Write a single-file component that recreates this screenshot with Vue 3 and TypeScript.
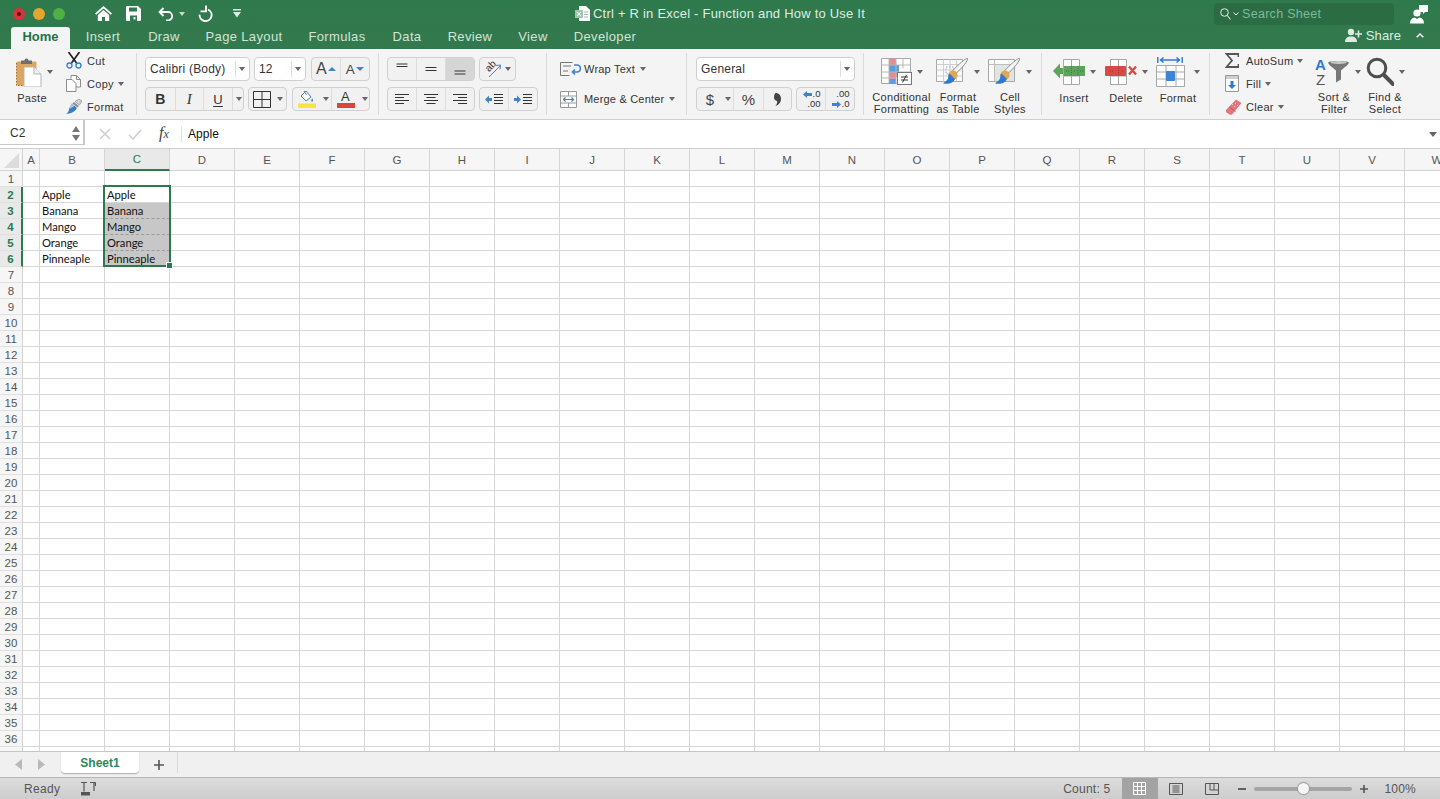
<script setup lang="ts">
const tabs: { label: string; width: number }[] = [
  { label: 'Insert', width: 66 },
  { label: 'Draw', width: 56 },
  { label: 'Page Layout', width: 104 },
  { label: 'Formulas', width: 82 },
  { label: 'Data', width: 58 },
  { label: 'Review', width: 68 },
  { label: 'View', width: 58 },
  { label: 'Developer', width: 86 },
]
const cols: string[] = 'ABCDEFGHIJKLMNOPQRSTUVW'.split('')
const rows: number[] = Array.from({ length: 37 }, (_, i) => i + 1)
const fruit: Record<number, string> = { 2: 'Apple', 3: 'Banana', 4: 'Mango', 5: 'Orange', 6: 'Pinneaple' }
function cellText(col: string, row: number): string {
  return col === 'B' || col === 'C' ? fruit[row] ?? '' : ''
}
function isSelRow(row: number): boolean {
  return row >= 2 && row <= 6
}
</script>

<template>
  <div class="app">
    <header class="head">
      <div class="titlebar">
        <div class="lights">
          <span class="light red"></span><span class="light yellow"></span><span class="light green"></span>
        </div>
        <svg class="q-home" width="17" height="15" viewBox="0 0 17 15"><path d="M8.5 0 0 7.5l1.2 1.3L8.5 2.4l7.3 6.4L17 7.500Z M2.800 9v6h4.200v-4h3v4h4.200V9L8.500 4Z" fill="#fff"/></svg>
        <svg class="q-save" width="15" height="15" viewBox="0 0 15 15"><path fill="#fff" fill-rule="evenodd" d="M1 0h11l3 3v11a1 1 0 0 1-1 1H1a1 1 0 0 1-1-1V1a1 1 0 0 1 1-1Zm2 1.500v4h8v-4Zm1 8V15h7V9.500Zm3.500 1.500h2v2.500h-2Z"/></svg>
        <svg class="q-undo" width="16" height="14" viewBox="0 0 16 14"><path d="M5.500 1 1.500 5l4 4M2 5h8a4.200 4.200 0 0 1 0 8.400H8" fill="none" stroke="#fff" stroke-width="1.800"/></svg>
        <span class="caret light-caret q-undo-c"></span>
        <svg class="q-redo" width="15" height="17" viewBox="0 0 15 17"><path d="M10 4.600a6 6 0 1 1-8.400 5M8 .5V6.400H2.500" fill="none" stroke="#fff" stroke-width="1.900"/></svg>
        <svg class="q-more" width="8" height="9" viewBox="0 0 8 9"><path d="M0 0h8v1.500H0Z M0 3h8L4 8.500Z" fill="#dfece4"/></svg>
        <div class="title">
          <svg width="15" height="15" viewBox="0 0 15 15"><path d="M4 0h7l4 4v11H4Z" fill="#fff"/><path d="M0 4h8v8H0Z" fill="#9fc7ae"/><path d="M9 6h4M9 8.500h4M9 11h4" stroke="#a9b8ae"/><path d="m2 6 4 4M6 6l-4 4" stroke="#fff"/></svg>
          <span>Ctrl + R in Excel - Function and How to Use It</span>
        </div>
        <div class="search">
          <svg width="11" height="12" viewBox="0 0 11 12"><circle cx="4.500" cy="4.500" r="3.800" fill="none" stroke="#e3efe8" stroke-width="1"/><path d="m7.300 7.500 3.200 4" stroke="#e3efe8" stroke-width="1.100"/></svg>
          <svg class="search-chev" width="6" height="4" viewBox="0 0 6 4"><path d="m.5.500 2.500 2.500L5.500.5" fill="none" stroke="#e3efe8"/></svg>
          <span>Search Sheet</span>
        </div>
        <svg class="person" width="18" height="20" viewBox="0 0 18 20"><path d="M9 1h9v7h-3l-2 2V8H9Z" fill="#fff"/><circle cx="7" cy="9" r="3.600" fill="#fff"/><path d="M0 19.500c0-3.500 1.500-5.500 4.500-6l2.500 1.500 2.500-1.500c3 .5 4.500 2.500 4.500 6Z" fill="#fff"/></svg>
      </div>
      <nav class="tabrow">
        <div class="tab active">Home</div>
        <div v-for="t in tabs" :key="t.label" class="tab" :style="{ width: t.width + 'px' }">{{ t.label }}</div>
        <div class="share">
          <svg width="17" height="14" viewBox="0 0 17 14"><circle cx="6" cy="4" r="3.200" fill="#dfece4"/><path d="M0 14c0-3.500 2-5.500 6-5.500s6 2 6 5.500Z" fill="#dfece4"/><path d="M13.500 2.500v7M10 6h7" stroke="#dfece4" stroke-width="1.600"/></svg>
          <span>Share</span>
          <svg class="share-chev" width="8" height="5" viewBox="0 0 8 5"><path d="M.7 4.300 4 1l3.300 3.300" fill="none" stroke="#fff" stroke-width="1.500"/></svg>
        </div>
      </nav>
    </header>

    <section class="ribbon">
      <div class="group g-clip">
        <div class="big paste">
          <div class="big-icon">
            <svg width="26" height="29" viewBox="0 0 26 29">
              <rect x="0.500" y="3.500" width="20" height="24" rx="1" fill="#dca661"/>
              <path d="M.5 5v22.500H10" fill="none" stroke="#a56d33" stroke-dasharray="1.500 1.500"/>
              <path d="M5 4V2.500h3.500a2 2 0 0 1 4 0H16V6H5Z" fill="#6f6f6f"/>
              <path d="M8 9h10l7 7v13H8Z" fill="#fff" stroke="#b5b5b5"/>
              <path d="M18 9v7h7" fill="#f0f0f0" stroke="#b5b5b5"/>
            </svg>
            <span class="caret"></span>
          </div>
          <div class="label">Paste</div>
        </div>
        <div class="list">
          <div class="item">
            <span class="ic">
              <svg width="16" height="17" viewBox="0 0 16 17"><path d="M2.500 0 10.500 11M13.500 0 5.500 11" stroke="#222" stroke-width="1.700"/><circle cx="3.500" cy="13.500" r="2.500" fill="none" stroke="#2f7fd1" stroke-width="1.300"/><circle cx="12.500" cy="13.500" r="2.500" fill="none" stroke="#2f7fd1" stroke-width="1.300"/></svg>
            </span>Cut
          </div>
          <div class="item">
            <span class="ic">
              <svg width="15" height="17" viewBox="0 0 15 17"><path d="M5 3.500V.5h5.500l4 4V12H10M10.500.5v4h4" fill="#fbfbfb" stroke="#8c8c8c"/><path d="M.5 4.500H6l4 4v8H.5Z" fill="#fbfbfb" stroke="#8c8c8c"/></svg>
            </span>Copy<span class="caret ml"></span>
          </div>
          <div class="item">
            <span class="ic">
              <svg width="16" height="15" viewBox="0 0 16 15"><path d="M9 2.500 13 0l3 2-2.500 4Z" fill="#d0d0d0" stroke="#888" stroke-width=".6"/><path d="M8 3l5 4-1.500 1.500-5-4Z" fill="#8d8d8d"/><path d="M6 4.500 11 9c-1.500 3-5 5.500-11 6 2-1 3-3 3-5.500Z" fill="#3d7cc4"/><path d="M6 4.500 8.500 6.800C6 9 3.500 10 3 9.500Z" fill="#a8c6e6"/></svg>
            </span>Format
          </div>
        </div>
      </div>

      <div class="group g-font">
        <div class="ctl-row">
          <div class="sel w-font"><span>Calibri (Body)</span><i class="sel-arrow"><span class="caret"></span></i></div>
          <div class="sel w-size"><span>12</span><i class="sel-arrow"><span class="caret"></span></i></div>
          <div class="seg w-grow">
            <div class="c f1"><span class="big-a">A</span><span class="tri-up"></span></div>
            <div class="c f1"><span class="small-a">A</span><span class="tri-down"></span></div>
          </div>
        </div>
        <div class="ctl-row">
          <div class="seg w-biu">
            <div class="c w30 bold">B</div>
            <div class="c w28 ital">I</div>
            <div class="c w29 under">U</div>
            <div class="c w12"><span class="caret"></span></div>
          </div>
          <div class="seg w-bord">
            <div class="c f1 noline">
              <svg width="18" height="17" viewBox="0 0 18 17"><path d="M.5.500h17v16H.5ZM9 .5v16M.5 8.500h17" fill="none" stroke="#333"/></svg>
            </div>
            <div class="c w12"><span class="caret"></span></div>
          </div>
          <div class="seg w-color">
            <div class="c w28 noline">
              <svg width="18" height="18" viewBox="0 0 18 18"><path d="m3 6 5-5 5 6-5 4Z" fill="#fff" stroke="#5a7fa8"/><path d="M6 1 8.500 5" stroke="#5a7fa8"/><path d="M14 8c1 1.500 1.500 2.500.5 3.500S13 11 13.500 9.500Z" fill="#3f83c9"/><rect y="13.500" width="18" height="4.500" fill="#f4e63c"/></svg>
            </div>
            <div class="c w11"><span class="caret"></span></div>
            <div class="c w27 noline">
              <div class="color-a"><span>A</span><i></i></div>
            </div>
            <div class="c w12"><span class="caret"></span></div>
          </div>
        </div>
      </div>

      <div class="group g-align">
        <div class="ctl-row">
          <div class="seg w-3">
            <div class="c f1"><svg width="14" height="12" viewBox="0 0 14 12"><path d="M1.500 1h11M1.500 3.500h11" stroke="#333"/></svg></div>
            <div class="c f1"><svg width="14" height="12" viewBox="0 0 14 12"><path d="M1.500 4.500h11M1.500 7.500h11" stroke="#333"/></svg></div>
            <div class="c f1 pressed"><svg width="14" height="12" viewBox="0 0 14 12"><path d="M1.500 8h11M1.500 11h11" stroke="#333"/></svg></div>
          </div>
          <div class="seg w-orient">
            <div class="c f1 noline">
              <svg class="orient" width="17" height="18" viewBox="0 0 17 18"><text x="1.500" y="10" class="ab" transform="rotate(-45 6 7)">ab</text><path d="M5 17 16 6M12 5.500l4.500-.5-.5 4.500" fill="none" stroke="#3f83c9"/></svg>
              <span class="caret ml"></span>
            </div>
          </div>
        </div>
        <div class="ctl-row">
          <div class="seg w-3">
            <div class="c f1"><svg width="16" height="11" viewBox="0 0 16 11"><path d="M1 .5h14M1 3.500h9M1 6.500h14M1 9.500h9" stroke="#333"/></svg></div>
            <div class="c f1"><svg width="16" height="11" viewBox="0 0 16 11"><path d="M1 .5h14M3.500 3.500h9M1 6.500h14M3.500 9.500h9" stroke="#333"/></svg></div>
            <div class="c f1"><svg width="16" height="11" viewBox="0 0 16 11"><path d="M1 .5h14M6 3.500h9M1 6.500h14M6 9.500h9" stroke="#333"/></svg></div>
          </div>
          <div class="seg w-indent">
            <div class="c f1"><svg width="18" height="11" viewBox="0 0 18 11"><path d="M0 5.500 4 1.500v2.500h3v3H4v2.500Z" fill="#3f83c9"/><path d="M9 .5h9M9 3.500h9M9 6.500h9M9 9.500h9" stroke="#333"/></svg></div>
            <div class="c f1"><svg width="18" height="11" viewBox="0 0 18 11"><path d="M7 5.500 3 1.500v2.500H0v3h3v2.500Z" fill="#3f83c9"/><path d="M9 .5h9M9 3.500h9M9 6.500h9M9 9.500h9" stroke="#333"/></svg></div>
          </div>
        </div>
      </div>

      <div class="group g-wrap">
        <div class="wrap-row">
          <span class="wrap-ic">
            <svg width="21" height="14" viewBox="0 0 21 14"><path d="M.5.500h12M.5.500v13h9M3 4h8M3 9h5" fill="none" stroke="#777"/><path d="M14 3h3a3 3 0 0 1 0 7h-4M15 7.500 12.500 10 15 12.500" fill="none" stroke="#3f83c9" stroke-width="1.700"/></svg>
          </span>Wrap Text<span class="caret ml-w"></span>
        </div>
        <div class="wrap-row">
          <span class="wrap-ic">
            <svg width="17" height="17" viewBox="0 0 17 17"><path d="M.5.500h16v16H.5ZM.5 5h16M.5 12h16M8.500.5V5M8.500 12v4.500" fill="#fff" stroke="#999"/><path d="M3.500 8.500h10M5.500 6.500l-2 2 2 2M11.500 6.500l2 2-2 2" fill="none" stroke="#3f83c9" stroke-width="1.200"/></svg>
          </span>Merge &amp; Center<span class="caret ml-w"></span>
        </div>
      </div>

      <div class="group g-num">
        <div class="ctl-row">
          <div class="sel w-general"><span>General</span><i class="sel-arrow"><span class="caret"></span></i></div>
        </div>
        <div class="ctl-row">
          <div class="seg w-money">
            <div class="c w26 noline num">$</div>
            <div class="c w11"><span class="caret"></span></div>
            <div class="c w30 num thin">%</div>
            <div class="c f1 noline">
              <svg width="7" height="13" viewBox="0 0 7 13"><path d="M1.500 0C5 0 7 2.500 7 6c0 3.500-2.500 6-5.500 7C3 11 3.500 9.500 3 8 1 7.500 0 6 0 4.500 0 2.500.5 1 1.500 0Z" fill="#444"/></svg>
            </div>
          </div>
          <div class="seg w-dec">
            <div class="c f1">
              <div class="dec"><div><svg width="9" height="7" viewBox="0 0 9 7"><path d="M0 3.500 4 0v2h5v3H4v2Z" fill="#3f83c9"/></svg><span>.0</span></div><div class="dec-b">.00</div></div>
            </div>
            <div class="c f1">
              <div class="dec"><div class="dec-b">.00</div><div><svg width="9" height="7" viewBox="0 0 9 7"><path d="M9 3.500 5 0v2H0v3h5v2Z" fill="#3f83c9"/></svg><span>.0</span></div></div>
            </div>
          </div>
        </div>
      </div>

      <div class="group g-cells">
        <div class="big w57">
          <div class="big-icon">
            <svg width="31" height="27" viewBox="0 0 31 27">
              <path d="M.5.500h29v25H.5Z" fill="#fff" stroke="#a8a8a8"/>
              <rect x="8" y="1" width="7" height="6" fill="#e58b92"/><rect x="8" y="7" width="10" height="7" fill="#5d9ddf"/><rect x="8" y="14" width="7" height="7" fill="#e58b92"/><rect x="15" y="14" width="6" height="5" fill="#e58b92"/><rect x="8" y="21" width="7" height="5" fill="#5d9ddf"/>
              <path d="M8 .5v25M15 .5v25M22 .5v10M.5 7h29M.5 14h29M.5 20h14" stroke="#b6b6b6" fill="none"/>
              <rect x="16.500" y="14.500" width="14" height="12" fill="#fff" stroke="#777"/>
              <path d="M20 19h7M20 22h7M25.500 17l-4 7.500" stroke="#333"/>
            </svg>
            <span class="caret"></span>
          </div>
          <div class="label">Conditional<br />Formatting</div>
        </div>
        <div class="big w56">
          <div class="big-icon">
            <svg width="33" height="28" viewBox="0 0 33 28">
              <path d="M.5 1.500h26v22H.5Z" fill="#fbfbfb" stroke="#a8a8a8"/>
              <path d="M.5 6.500h26M.5 12h26M.5 18h26M7.500 1.500v22M14 1.500v22M20.500 1.500v22" stroke="#cfcfcf"/>
              <path d="M10 9h8v7h-8Z" fill="none" stroke="#7eaedf" stroke-dasharray="1.500 1.500"/>
              <path d="M31.500.5c1 1-5 10-12 15l-3-2.500C22 6.500 30.500-.5 31.500.5Z" fill="#f4f4f4" stroke="#8c8c8c"/>
              <circle cx="17" cy="17" r="4.600" fill="#e0a850"/>
              <path d="M13.500 15.500c-1.500 1-1 3.500-1.500 5-1 2-3 3.500-5 5 5 1 10 0 12-4.500Z" fill="#2f79cf"/>
            </svg>
            <span class="caret"></span>
          </div>
          <div class="label">Format<br />as Table</div>
        </div>
        <div class="big w48">
          <div class="big-icon">
            <svg width="33" height="28" viewBox="0 0 33 28">
              <path d="M.5 1.500h26v22H.5Z" fill="#fbfbfb" stroke="#a8a8a8"/>
              <rect x="6" y="6" width="20" height="17" fill="#dfe5e3"/>
              <path d="M.5 6.500h26M6.500 1.500v22" stroke="#bdbdbd"/>
              <path d="M31.500.5c1 1-5 10-12 15l-3-2.500C22 6.500 30.500-.5 31.500.5Z" fill="#f4f4f4" stroke="#8c8c8c"/>
              <circle cx="17" cy="17" r="4.600" fill="#e0a850"/>
              <path d="M13.500 15.500c-1.500 1-1 3.500-1.500 5-1 2-3 3.500-5 5 5 1 10 0 12-4.500Z" fill="#2f79cf"/>
            </svg>
            <span class="caret"></span>
          </div>
          <div class="label">Cell<br />Styles</div>
        </div>
      </div>

      <div class="group g-ins">
        <div class="big w52">
          <div class="big-icon">
            <svg width="32" height="27" viewBox="0 0 32 27">
              <path d="M10.500.5h16v25h-16ZM10.500 8h16M10.500 17h16M18.500.5v25" fill="#fff" stroke="#a8a8a8"/>
              <rect x="11" y="7" width="21" height="10" fill="#5ba458"/>
              <path d="M18.500 7v10M25 7v10M13 12h3M21 12h2M27 12h3" stroke="#357a3a" stroke-dasharray="1 1"/>
              <path d="M0 12 7 4.500V9h3v6H7v4.500Z" fill="#5ba458"/>
            </svg>
            <span class="caret"></span>
          </div>
          <div class="label">Insert</div>
        </div>
        <div class="big w52">
          <div class="big-icon">
            <svg width="32" height="27" viewBox="0 0 32 27">
              <path d="M5.500.5h16v25h-16ZM5.500 8h16M5.500 17h16M13.500.5v25" fill="#fff" stroke="#a8a8a8"/>
              <rect x="0" y="7" width="21" height="10" rx="1" fill="#d94a45"/>
              <path d="M5 12h3M13.500 7v10M17 12h2" stroke="#a83431" stroke-dasharray="1 1"/>
              <path d="m24 7.500 7 8M31 7.500l-7 8" stroke="#d94a45" stroke-width="2.400"/>
            </svg>
            <span class="caret"></span>
          </div>
          <div class="label">Delete</div>
        </div>
        <div class="big w52">
          <div class="big-icon">
            <svg width="33" height="30" viewBox="0 0 33 30">
              <path d="M.8 0v6M25.200 0v6M3 3h20M6.500.5 3.500 3l3 2.500M19.500.5l3 2.500-3 2.500" transform="translate(1 0)" fill="none" stroke="#2f79cf" stroke-width="1.400"/>
              <path d="M.5 8.500h28v21H.5ZM.5 15h28M.5 22h28M10 8.500v21M20 8.500v21" fill="#fff" stroke="#a8a8a8"/>
              <rect x="10" y="14" width="9" height="10" rx="1" fill="#3f83d6"/>
            </svg>
            <span class="caret"></span>
          </div>
          <div class="label">Format</div>
        </div>
      </div>

      <div class="group g-edit">
        <div class="list">
          <div class="item">
            <span class="ic"><svg width="14" height="15" viewBox="0 0 14 15"><path d="M13.500 4V1H1.500L7 7.500 1.500 14h12v-3" fill="none" stroke="#555" stroke-width="1.800"/></svg></span>AutoSum<span class="caret ml"></span>
          </div>
          <div class="item">
            <span class="ic"><svg width="14" height="17" viewBox="0 0 14 17"><path d="M.5.500h13v16H.5Z" fill="#fff" stroke="#9a9a9a"/><rect x="1" y="1" width="12" height="3" fill="#cfcfcf"/><path d="M5.500 6h3v4h2.500L7 14 3 10h2.500Z" fill="#2f79cf"/></svg></span>Fill<span class="caret ml"></span>
          </div>
          <div class="item">
            <span class="ic"><svg width="17" height="16" viewBox="0 0 17 16"><path d="M11 .5 16.500 4l-9 11c-1 1-2 1-3 .5L1.500 13.500c-1-1-1-2 0-3Z" fill="#e2777f"/><path d="m4.500 8 6 4.500" stroke="#c6535b"/><path d="M7 5l1 1M10 4l1 1M12 6l1 1M9 7l1 1" stroke="#f3c2c5"/></svg></span>Clear<span class="caret ml"></span>
          </div>
        </div>
        <div class="big w48 sort">
          <div class="big-icon">
            <svg width="35" height="30" viewBox="0 0 35 30">
              <text x="0" y="13" class="az az-a">A</text>
              <text x="1" y="28" class="az az-z">Z</text>
              <path d="M13 5.500c2-2 19-2 21 0 0 2-6 6-8 8v9l-5 3V13.500c-2-2-8-6-8-8Z" fill="#777"/>
              <ellipse cx="23.500" cy="5.500" rx="8" ry="1.500" fill="#c9c9c9"/>
            </svg>
            <span class="caret"></span>
          </div>
          <div class="label">Sort &amp;<br />Filter</div>
        </div>
        <div class="big w46">
          <div class="big-icon">
            <svg width="28" height="29" viewBox="0 0 28 29"><circle cx="11" cy="11" r="8.800" fill="none" stroke="#4e4e4e" stroke-width="3"/><path d="m18 18 9 9" stroke="#4e4e4e" stroke-width="4" stroke-linecap="round"/></svg>
            <span class="caret"></span>
          </div>
          <div class="label">Find &amp;<br />Select</div>
        </div>
      </div>
    </section>

    <section class="fbar">
      <div class="namebox">
        <span>C2</span>
        <svg width="8" height="15" viewBox="0 0 8 15"><path d="M4 0 8 6H0ZM4 15 0 9h8Z" fill="#777"/></svg>
      </div>
      <svg class="fb-x" width="12" height="12" viewBox="0 0 12 12"><path d="m1 1 10 10M11 1 1 11" stroke="#cdcdcd" stroke-width="1.500"/></svg>
      <svg class="fb-v" width="14" height="11" viewBox="0 0 14 11"><path d="m1 6 4 4 8-9" fill="none" stroke="#cdcdcd" stroke-width="1.500"/></svg>
      <span class="fx"><i>f</i><i class="fx-x">x</i></span>
      <span class="fb-sep"></span>
      <span class="fb-val">Apple</span>
      <svg class="fb-down" width="8" height="5" viewBox="0 0 8 5"><path d="M0 0h8L4 5Z" fill="#666"/></svg>
    </section>

    <section class="sheet">
      <div class="hrow">
        <div class="corner">
          <svg width="15" height="15" viewBox="0 0 15 15"><path d="M15 0v15H0Z" fill="#dcdcdc"/></svg>
        </div>
        <div v-for="c in cols" :key="c" class="hcell" :class="['col-' + c, { cur: c === 'C' }]">{{ c }}</div>
      </div>
      <div v-for="r in rows" :key="r" class="row">
        <div class="rhead" :class="{ cur: isSelRow(r) }">{{ r <= 36 ? r : '' }}</div>
        <div v-for="c in cols" :key="c" class="cell" :class="['col-' + c, { fill: c === 'C' && r >= 3 && r <= 6 }]">{{ cellText(c, r) }}</div>
      </div>
      <div class="selection"><span class="handle"></span></div>
    </section>

    <section class="sheettabs">
      <svg class="arr-l" width="7" height="11" viewBox="0 0 7 11"><path d="M7 0v11L0 5.500Z" fill="#b9b9b9"/></svg>
      <svg class="arr-r" width="7" height="11" viewBox="0 0 7 11"><path d="M0 0v11l7-5.500Z" fill="#b9b9b9"/></svg>
      <div class="sheettab">Sheet1</div>
      <svg class="plus" width="10" height="10" viewBox="0 0 10 10"><path d="M5 0v10M0 5h10" stroke="#555" stroke-width="1.600"/></svg>
      <span class="tabs-sep"></span>
    </section>

    <footer class="status">
      <span class="ready">Ready</span>
      <svg class="macro" width="15" height="14" viewBox="0 0 15 14"><path d="M0 .5h6M3 .5v9M9 .5h4.500a1 1 0 0 1 1 1V4" fill="none" stroke="#555" stroke-width="1.200"/><rect x="0" y="10" width="9" height="3.500" fill="#555"/><path d="M13 1v8" stroke="#555" stroke-width="1.200"/></svg>
      <span class="count">Count: 5</span>
      <div class="view active-view">
        <svg width="13" height="13" viewBox="0 0 13 13"><path d="M.5.500h12v12H.5ZM4.500.5v12M8.500.5v12M.5 4.500h12M.5 8.500h12" fill="none" stroke="#fff"/></svg>
      </div>
      <div class="view">
        <svg width="14" height="12" viewBox="0 0 14 12"><path d="M.5.500h13v11H.5Z" fill="none" stroke="#555"/><path d="M3.500 3h7M3.500 5h7M3.500 7h7M3.500 9h7" stroke="#555"/></svg>
      </div>
      <div class="view">
        <svg width="14" height="12" viewBox="0 0 14 12"><path d="M.5.500h13v11H.5ZM5 .5V7h8.500M9 .5V7" fill="none" stroke="#555"/></svg>
      </div>
      <svg class="zoom-minus" width="8" height="2" viewBox="0 0 8 2"><path d="M0 1h8" stroke="#555" stroke-width="1.800"/></svg>
      <div class="slider"><span class="thumb"></span></div>
      <svg class="zoom-plus" width="8" height="8" viewBox="0 0 8 8"><path d="M0 4h8M4 0v8" stroke="#555" stroke-width="1.600"/></svg>
      <span class="zoom-val">100%</span>
    </footer>
  </div>
</template>

<style>
html, body { margin: 0; padding: 0; background: #fff; overflow: hidden; }
</style>

<style scoped>
.app {
  width: 1440px;
  height: 799px;
  overflow: hidden;
  display: flex;
  flex-direction: column;
  font-family: "Liberation Sans", Arial, sans-serif;
  color: #333;
  font-size: 11px;
  letter-spacing: .3px;
}
svg { display: block; flex: none; }
.orient { overflow: visible; }
.caret {
  display: inline-block;
  flex: none;
  width: 0;
  height: 0;
  border-left: 3px solid transparent;
  border-right: 3px solid transparent;
  border-top: 4px solid #666;
}
.ml { margin-left: 4px; }
.ml-w { margin-left: 5px; }

/* head */
.head { height: 49px; background: linear-gradient(#2f7a4c, #33794e); flex: none; }
.titlebar { height: 27px; display: flex; align-items: center; position: relative; }
.lights { display: flex; gap: 8px; margin-left: 13px; }
.light { width: 12px; height: 12px; border-radius: 50%; position: relative; }
.red { background: #d8323c; }
.red::after { content: ""; position: absolute; left: 4px; top: 4px; width: 4px; height: 4px; border-radius: 50%; background: #5a0f14; }
.yellow { background: #e3a72f; }
.green { background: #4fb043; }
.q-home { margin-left: 30px; }
.q-save { margin-left: 14px; }
.q-undo { margin-left: 17px; }
.light-caret { border-top-color: #c6dccf; margin-left: 5px; border-top-width: 4px; }
.q-redo { margin-left: 13px; }
.q-more { margin-left: 20px; }
.title { display: flex; align-items: center; gap: 3px; margin-left: 334px; font-size: 13px; color: #dfece4; letter-spacing: .22px; white-space: nowrap; }
.search {
  position: absolute;
  left: 1214px;
  top: 3px;
  width: 180px;
  height: 22px;
  box-sizing: border-box;
  background: #2b6c45;
  border-radius: 4px;
  display: flex;
  align-items: center;
  padding-left: 6px;
  color: #7fb998;
  font-size: 12.500px;
}
.search-chev { margin: 0 3px 0 2px; }
.person { position: absolute; left: 1410px; top: 4px; }
.tabrow { height: 22px; display: flex; align-items: stretch; padding-left: 11px; position: relative; }
.tab {
  display: flex;
  align-items: center;
  justify-content: center;
  font-size: 13px;
  color: #d2e4d9;
  letter-spacing: .35px;
  white-space: nowrap;
  padding-bottom: 3px;
  box-sizing: border-box;
}
.tab.active {
  width: 59px;
  background: #f4f4f4;
  border-radius: 3px 3px 0 0;
  color: #217346;
  font-weight: 700;
  letter-spacing: 0;
}
.share { margin-left: auto; display: flex; align-items: center; font-size: 13px; color: #dfece4; padding-right: 16px; padding-bottom: 6px; letter-spacing: .1px; }
.share span { margin-left: 4px; }
.share-chev { margin-left: 15px; }

/* ribbon */
.ribbon {
  height: 71px;
  box-sizing: border-box;
  flex: none;
  display: flex;
  background: #f4f4f4;
  border-bottom: 1px solid #d0d0d0;
}
.group {
  height: 62px;
  margin-top: 4px;
  box-sizing: border-box;
  border-right: 1px solid #dadada;
  flex: none;
}
.g-clip { width: 137px; display: flex; }
.g-font { width: 242px; padding: 4px 0 0 8px; }
.g-align { width: 168px; padding: 4px 0 0 8px; }
.g-wrap { width: 140px; padding: 4px 0 0 13px; }
.g-num { width: 177px; padding: 4px 0 0 9px; }
.g-cells { width: 178px; padding-left: 9px; display: flex; }
.g-ins { width: 168px; padding-left: 6px; display: flex; }
.g-edit { width: 230px; padding-left: 15px; display: flex; border-right: 0; }

.big { flex: none; display: flex; flex-direction: column; align-items: center; }
.big-icon { height: 36px; display: flex; align-items: center; gap: 5px; margin-top: 1px; }
.label { font-size: 11px; line-height: 12px; text-align: center; margin-top: 2px; white-space: nowrap; }
.paste { width: 64px; }
.paste .big-icon { margin-left: 4px; }
.w57 { width: 57px; }
.w56 { width: 56px; }
.w52 { width: 52px; }
.w48 { width: 48px; }
.w46 { width: 46px; }
.sort { margin-left: -5px; }
.sort .big-icon { margin-left: 8px; }
.sort + .big { margin-left: 4px; }
.az { font-family: "Liberation Sans", sans-serif; font-size: 15px; letter-spacing: 0; }
.az-a { fill: #2f79cf; font-weight: 700; }
.az-z { fill: #555; }

.list { width: 90px; margin-top: -4px; flex: none; }
.g-clip .list { margin-left: 2px; width: 70px; }
.item { height: 23px; display: flex; align-items: center; white-space: nowrap; }
.ic { width: 21px; flex: none; display: flex; }

.ctl-row { display: flex; height: 24px; margin-bottom: 6px; gap: 4px; }
.g-font .ctl-row { gap: 4px; }
.sel {
  box-sizing: border-box;
  background: #fff;
  border: 1px solid #cfcfcf;
  border-radius: 4px;
  display: flex;
  align-items: center;
  padding-left: 4px;
  font-size: 12px;
  letter-spacing: .2px;
  justify-content: space-between;
}
.sel > span { padding-bottom: 1px; }
.sel-arrow { width: 12px; height: 16px; border-left: 1px solid #dedede; display: flex; align-items: center; justify-content: center; margin-right: 1px; }
.w-font { width: 105px; }
.w-size { width: 52px; }
.w-general { width: 159px; }
.seg {
  box-sizing: border-box;
  background: #f1f1f1;
  border: 1px solid #d0d0d0;
  border-radius: 4px;
  display: flex;
  overflow: hidden;
}
.c { box-sizing: border-box; display: flex; align-items: center; justify-content: center; border-right: 1px solid #dcdcdc; flex: none; }
.c:last-child, .noline { border-right: 0; }
.f1 { flex: 1; min-width: 0; }
.w-grow { width: 59px; margin-left: 1px; }
.w-biu { width: 99px; }
.w-bord { width: 39px; }
.w-color { width: 78px; margin-left: 1px; }
.w-3 { width: 88px; }
.w-orient { width: 37px; }
.w-indent { width: 59px; }
.w-money { width: 96px; }
.w-dec { width: 59px; }
.w30 { width: 30px; }
.w29 { width: 29px; }
.w28 { width: 28px; }
.w27 { width: 27px; }
.w26 { width: 26px; }
.w12 { width: 12px; }
.w11 { width: 11px; }
.bold { font-weight: 700; font-size: 14px; color: #333; }
.ital { font-family: "Liberation Serif", serif; font-style: italic; font-size: 15px; }
.under { font-size: 13px; text-decoration: underline; text-underline-offset: 2px; }
.big-a { font-size: 16px; color: #444; }
.small-a { font-size: 13.500px; color: #444; }
.tri-up { width: 0; height: 0; margin-left: 1px; border-left: 4px solid transparent; border-right: 4px solid transparent; border-bottom: 4px solid #3f83c9; }
.tri-down { width: 0; height: 0; margin-left: 1px; border-left: 4px solid transparent; border-right: 4px solid transparent; border-top: 4px solid #3f83c9; }
.color-a { display: flex; flex-direction: column; align-items: center; width: 18px; font-size: 13px; line-height: 13px; }
.color-a i { display: block; width: 18px; height: 5px; background: #d9443f; }
.pressed { background: #d6d6d6; }
.ab { font-family: "Liberation Sans", sans-serif; font-size: 10px; fill: #333; letter-spacing: 0; }
.wrap-row { height: 24px; margin-bottom: 6px; display: flex; align-items: center; white-space: nowrap; letter-spacing: .2px; }
.wrap-ic { width: 24px; flex: none; display: flex; justify-content: flex-start; }
.num { font-size: 15px; color: #444; }
.thin { border-right: 1px solid #dcdcdc; }
.dec { font-size: 9.500px; line-height: 10px; letter-spacing: 0; color: #333; }
.dec div { display: flex; align-items: center; justify-content: flex-end; gap: 1px; }
.dec-b { width: 19px; }

/* formula bar */
.fbar {
  height: 29px;
  box-sizing: border-box;
  flex: none;
  background: #fff;
  border-bottom: 1px solid #cdcdcd;
  display: flex;
  align-items: center;
  position: relative;
}
.namebox {
  box-sizing: border-box;
  width: 85px;
  height: 25px;
  align-self: flex-start;
  border-right: 2px solid #c9c9c9;
  border-bottom: 1px solid #c9c9c9;
  background: #fff;
  display: flex;
  align-items: center;
  justify-content: space-between;
  padding: 2px 3px 0 10px;
  font-size: 12px;
  letter-spacing: .1px;
}
.fb-x { margin-left: 14px; }
.fb-v { margin-left: 17px; }
.fx { margin-left: 17px; font-family: "Liberation Serif", serif; font-size: 16px; color: #444; width: 16px; letter-spacing: 0; padding-bottom: 2px; }
.fx-x { font-size: 12px; }
.fb-sep { width: 1px; height: 16px; background: #e2e2e2; margin-left: 6px; }
.fb-val { margin-left: 6px; font-size: 12px; color: #111; letter-spacing: .05px; }
.fb-down { margin-left: auto; margin-right: 3px; }

/* sheet */
.sheet { height: 603px; box-sizing: border-box; flex: none; overflow: hidden; position: relative; background: #fff; border-bottom: 1px solid #c6c6c6; }
.hrow { display: flex; height: 22px; width: 1469px; }
.corner { width: 23px; box-sizing: border-box; background: #f6f6f6; border-right: 1px solid #d2d2d2; border-bottom: 1px solid #d2d2d2; display: flex; align-items: flex-end; justify-content: flex-end; padding: 0 3px 2px 0; flex: none; }
.hcell {
  box-sizing: border-box;
  flex: none;
  width: 65px;
  background: #f6f6f6;
  border-right: 1px solid #d6d6d6;
  border-bottom: 1px solid #d2d2d2;
  display: flex;
  align-items: center;
  justify-content: center;
  font-size: 11.500px;
  letter-spacing: 0;
  color: #555;
  padding-top: 0;
}
.hcell.col-A, .cell.col-A { width: 17px; }
.hcell.cur { background: #e9e9e9; color: #2a7a4e; border-bottom: 2px solid #2a7a4e; }
.row { display: flex; height: 16px; width: 1469px; }
.rhead {
  box-sizing: border-box;
  width: 23px;
  flex: none;
  background: #f6f6f6;
  border-right: 1px solid #d2d2d2;
  border-bottom: 1px solid #e0e0e0;
  font-size: 11.500px;
  letter-spacing: 0;
  color: #555;
  text-align: center;
  line-height: 16px;
}
.rhead.cur { background: #e9e9e9; color: #2a7a4e; font-weight: 700; border-right: 2px solid #2a7a4e; }
.cell {
  box-sizing: border-box;
  width: 65px;
  flex: none;
  border-right: 1px solid #d6d6d6;
  border-bottom: 1px solid #d6d6d6;
  font-family: Lato, "Liberation Sans", sans-serif;
  font-size: 11.200px;
  letter-spacing: 0;
  line-height: 16px;
  padding-left: 2px;
  color: #111;
  white-space: nowrap;
  overflow: hidden;
}
.cell.fill { background: #c7c7c7; border-bottom: 1px dashed #9b9b9b; border-right-color: #c7c7c7; }
.selection {
  position: absolute;
  left: 103px;
  top: 36px;
  width: 68px;
  height: 82px;
  box-sizing: border-box;
  border: 2px solid #2a7a4e;
  pointer-events: none;
}
.handle {
  position: absolute;
  right: -3px;
  bottom: -3px;
  width: 5px;
  height: 5px;
  background: #2a7a4e;
  outline: 1px solid #fff;
}

/* sheet tabs */
.sheettabs { height: 25px; flex: none; background: #f0f0f0; display: flex; align-items: center; }
.arr-l { margin-left: 15px; }
.arr-r { margin-left: 16px; }
.sheettab {
  margin-left: 16px;
  width: 78px;
  height: 21px;
  align-self: flex-start;
  background: #fff;
  border-radius: 0 0 4px 4px;
  box-shadow: 0 1px 1px #b0b0b0;
  display: flex;
  align-items: center;
  justify-content: center;
  font-weight: 700;
  font-size: 12px;
  letter-spacing: 0;
  color: #2b8a57;
}
.plus { margin-left: 15px; }
.tabs-sep { width: 1px; height: 21px; background: #dadada; margin-left: 13px; align-self: flex-start; }

/* status */
.status {
  flex: 1;
  box-sizing: border-box;
  border-top: 1px solid #b5b5b5;
  background: linear-gradient(#dcdcdc, #cdcdcd);
  display: flex;
  align-items: center;
  font-size: 12px;
  color: #555;
  position: relative;
}
.ready { margin-left: 24px; letter-spacing: .3px; }
.macro { margin-left: 21px; }
.count { margin-left: auto; letter-spacing: .25px; }
.view { width: 36px; height: 100%; display: flex; align-items: center; justify-content: center; flex: none; }
.count + .view { margin-left: 11px; }
.active-view { background: #a3a3a3; }
.zoom-minus { margin-left: 8px; }
.slider { width: 98px; height: 4px; margin-left: 8px; border-radius: 2px; background: #a5a5a5; position: relative; }
.thumb { position: absolute; left: 44px; top: -4px; width: 11px; height: 11px; border-radius: 50%; background: #f6f6f6; border: 0; box-shadow: 0 0 1px 1px #9a9a9a; }
.zoom-plus { margin-left: 8px; }
.zoom-val { margin-left: 17px; margin-right: 24px; letter-spacing: .2px; }
</style>
